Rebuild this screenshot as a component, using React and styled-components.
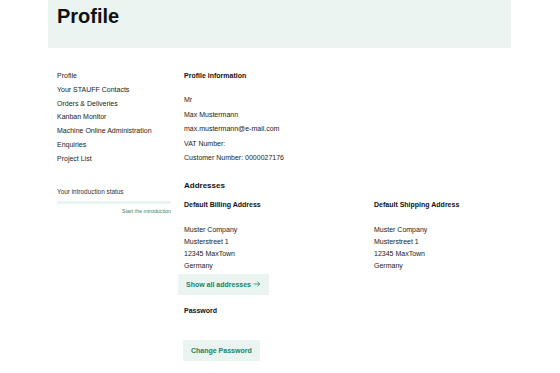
import React from "react";
import styled, { createGlobalStyle } from "styled-components";

const GlobalStyle = createGlobalStyle`
  body {
    margin: 0;
    background: #fff;
    font-family: "Liberation Sans", Arial, sans-serif;
    color: #1c1c1c;
  }
`;

const Page = styled.div`
  width: 560px;
  min-height: 373px;
`;

const Container = styled.div`
  margin-left: 48px;
  width: 463px;
`;

const Banner = styled.header`
  height: 48px;
  background: #eaf5f1;
  padding: 4px 0 0 9px;
  box-sizing: border-box;
`;

const Title = styled.h1`
  margin: 0;
  font-size: 20px;
  line-height: 24px;
  font-weight: 700;
  color: #111;
`;

const Main = styled.div`
  display: grid;
  grid-template-columns: 114px 1fr;
  column-gap: 13px;
  padding: 21px 0 0 9px;
`;

const Sidebar = styled.nav`
  display: flex;
  flex-direction: column;
`;

const NavList = styled.ul`
  list-style: none;
  margin: 0;
  padding: 0;
`;

const NavItem = styled.li`
  font-size: 7px;
  line-height: 13.8px;
  color: #222;
`;

const Status = styled.div`
  margin-top: 20px;
  display: flex;
  flex-direction: column;
`;

const StatusLabel = styled.div`
  font-size: 6.4px;
  line-height: 12px;
  color: #333;
`;

const StatusBar = styled.div`
  margin-top: 3px;
  height: 3px;
  background: #eaf5f1;
`;

const StatusLink = styled.a`
  align-self: flex-end;
  margin-top: 4px;
  font-size: 5.3px;
  line-height: 7px;
  color: #2a8c6c;
  text-decoration: none;
`;

const Content = styled.section`
  display: flex;
  flex-direction: column;
  align-items: flex-start;
`;

const Label = styled.div`
  font-size: 7px;
  line-height: 14px;
  font-weight: 700;
  color: #111;
  margin-top: ${({ $gap }) => $gap || 0}px;
`;

const Heading = styled.h2`
  margin: 13px 0 0;
  font-size: 8px;
  line-height: 14px;
  font-weight: 700;
  color: #111;
`;

const Lines = styled.div`
  margin-top: ${({ $gap }) => $gap}px;
  font-size: 7px;
  line-height: ${({ $lh }) => $lh}px;
  color: #222;
`;

const Columns = styled.div`
  display: grid;
  grid-template-columns: 190px 1fr;
  width: 100%;
  margin-top: 5px;
`;

const Column = styled.div`
  display: flex;
  flex-direction: column;
  align-items: flex-start;
`;

const Button = styled.button`
  border: 0;
  background: #eaf5f1;
  color: #22805f;
  font-family: inherit;
  font-weight: 700;
  font-size: 7px;
  height: 21px;
  padding: 0 ${({ $pad }) => $pad}px;
  margin-top: ${({ $gap }) => $gap}px;
  margin-left: ${({ $shift }) => $shift || 0}px;
  display: flex;
  align-items: center;
  gap: 2px;
  cursor: pointer;
`;

const navItems = [
  "Profile",
  "Your STAUFF Contacts",
  "Orders & Deliveries",
  "Kanban Monitor",
  "Machine Online Administration",
  "Enquiries",
  "Project List",
];

const address = ["Muster Company", "Musterstreet 1", "12345 MaxTown", "Germany"];

export default function App() {
  return (
    <Page>
      <GlobalStyle />
      <Container>
        <Banner>
          <Title>Profile</Title>
        </Banner>
        <Main>
          <Sidebar>
            <NavList>
              {navItems.map((item) => (
                <NavItem key={item}>{item}</NavItem>
              ))}
            </NavList>
            <Status>
              <StatusLabel>Your introduction status</StatusLabel>
              <StatusBar />
              <StatusLink href="#">Start the introduction</StatusLink>
            </Status>
          </Sidebar>
          <Content>
            <Label>Profile information</Label>
            <Lines $gap={10} $lh={14.5}>
              <div>Mr</div>
              <div>Max Mustermann</div>
              <div>max.mustermann@e-mail.com</div>
              <div>VAT Number:</div>
              <div>Customer Number: 0000027176</div>
            </Lines>
            <Heading>Addresses</Heading>
            <Columns>
              <Column>
                <Label>Default Billing Address</Label>
                <Lines $gap={12} $lh={12}>
                  {address.map((l) => (
                    <div key={l}>{l}</div>
                  ))}
                </Lines>
                <Button $gap={2} $pad={8} $shift={-6}>
                  Show all addresses
                  <svg width="8" height="8" viewBox="0 0 10 10" fill="none">
                    <path d="M1 5h7.5M5.5 2l3 3-3 3" stroke="currentColor" strokeWidth="1" />
                  </svg>
                </Button>
              </Column>
              <Column>
                <Label>Default Shipping Address</Label>
                <Lines $gap={12} $lh={12}>
                  {address.map((l) => (
                    <div key={l}>{l}</div>
                  ))}
                </Lines>
              </Column>
            </Columns>
            <Label $gap={9}>Password</Label>
            <Button $gap={22} $pad={8} $shift={-1}>
              Change Password
            </Button>
          </Content>
        </Main>
      </Container>
    </Page>
  );
}
